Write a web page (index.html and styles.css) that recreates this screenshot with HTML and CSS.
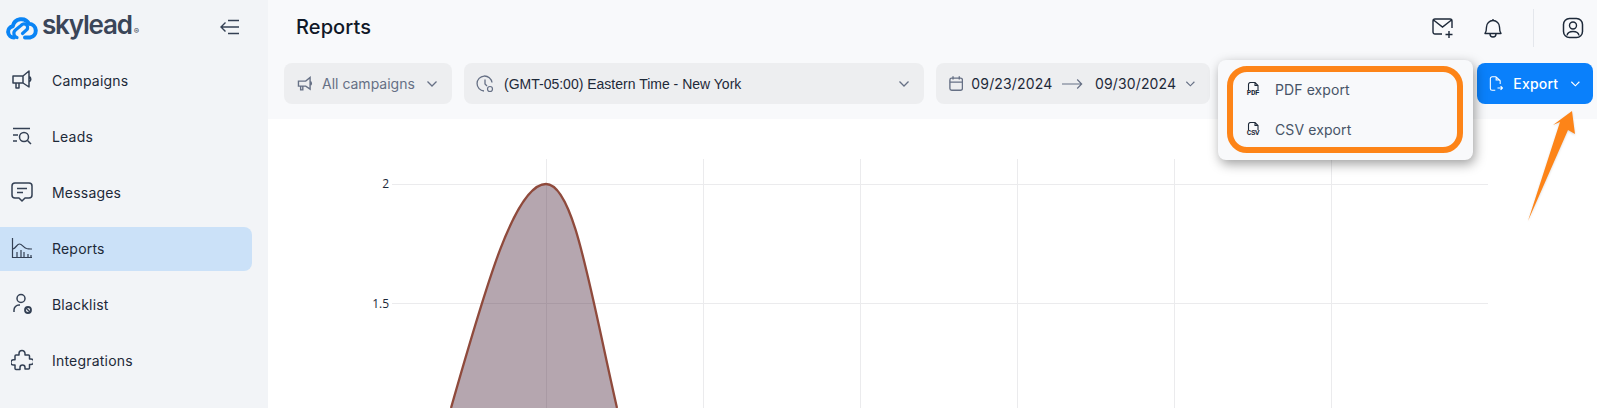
FILE: index.html
```html
<!DOCTYPE html>
<html lang="en">
<head>
<meta charset="utf-8">
<title>Reports</title>
<link rel="stylesheet" href="styles.css">
</head>
<body>
<div class="app">
  <aside class="sidebar">
    <div class="brand">
      <svg class="logo" width="32" height="26" viewBox="0 0 32 26"><path d="M8 23.500A5.700 5.700 0 0 1 6.800 12.200 8.700 8.700 0 0 1 23 9.800 6.900 6.900 0 0 1 24 23.500H19" fill="none" stroke="#0a84f5" stroke-width="4" stroke-linejoin="round" stroke-linecap="round"/><path d="M11 23.500A4.300 4.300 0 0 1 9.500 16L15 11.500A3.600 3.600 0 0 1 21 15.500L16.500 19.500" fill="none" stroke="#0a84f5" stroke-width="3.200" stroke-linecap="round"/></svg>
      <span class="brand-name">skylead</span><span class="brand-mark">®</span>
      <svg class="collapse" width="22" height="16" viewBox="0 0 22 16"><path d="M9 1.500h11M9 14.500h11M2 8h18M6.500 3.500L2 8l4.500 4.500" fill="none" stroke="#344054" stroke-width="1.400"/></svg>
    </div>
    <nav class="nav">
      <a class="nav-item"><svg class="nav-icon" viewBox="0 0 22 22"><path d="M2 7h10l6-5v16l-6-4H2zM5 14v5h3v-5M18 7.500a3 3 0 0 1 0 5.500M12 7v7" fill="none" stroke="#344054" stroke-width="1.500" stroke-linejoin="round"/></svg><span>Campaigns</span></a>
      <a class="nav-item"><svg class="nav-icon" viewBox="0 0 22 22"><path d="M2 3.500h17M2 10h5M2 16h4" fill="none" stroke="#344054" stroke-width="1.500"/><circle cx="13" cy="12" r="4.500" fill="none" stroke="#344054" stroke-width="1.500"/><path d="M16.500 15.500L20 19" stroke="#344054" stroke-width="1.500"/></svg><span>Leads</span></a>
      <a class="nav-item"><svg class="nav-icon" viewBox="0 0 22 22"><path d="M4 2h14a3 3 0 0 1 3 3v9a3 3 0 0 1-3 3h-4l-3 3-3-3H4a3 3 0 0 1-3-3V5a3 3 0 0 1 3-3zM6 7.500h10M6 11.500h6" fill="none" stroke="#344054" stroke-width="1.500" stroke-linejoin="round"/></svg><span>Messages</span></a>
      <a class="nav-item active"><svg class="nav-icon" viewBox="0 0 22 22"><path d="M1.500 1v19.500H21M2 12c3-1 4-5 6.500-5 2.500 0 4 3.500 7 4.500 2 .6 3.500.5 5.500.5M6 20v-5M10 20v-7M13 20v-5M17 20v-3M20 20v-2" fill="none" stroke="#344054" stroke-width="1.200"/></svg><span>Reports</span></a>
      <a class="nav-item"><svg class="nav-icon" viewBox="0 0 22 22"><circle cx="10" cy="5.500" r="4" fill="none" stroke="#344054" stroke-width="1.500"/><path d="M3 19v-2a5 5 0 0 1 5-5h1" fill="none" stroke="#344054" stroke-width="1.500"/><circle cx="17" cy="17" r="3" fill="none" stroke="#344054" stroke-width="1.800"/><path d="M15 15l4 4" stroke="#344054" stroke-width="1.500"/></svg><span>Blacklist</span></a>
      <a class="nav-item"><svg class="nav-icon" viewBox="0 0 22 22"><path d="M8 4.500a3 3 0 1 1 6 0V6h3.500a1 1 0 0 1 1 1v3H20a2.700 2.700 0 0 1 0 5.500h-1.500v3.500a1 1 0 0 1-1 1H14v-1.500a2.500 2.500 0 0 0-5 0V20.500H5a1 1 0 0 1-1-1V16H2.500a2.600 2.600 0 0 1 0-5.200H4V7a1 1 0 0 1 1-1h3z" fill="none" stroke="#344054" stroke-width="1.500" stroke-linejoin="round"/></svg><span>Integrations</span></a>
    </nav>
  </aside>
  <main class="main">
    <header class="header">
      <div class="title-row">
        <h1 class="title">Reports</h1>
        <div class="top-icons">
          <svg class="mail" width="22" height="22" viewBox="0 0 22 22"><path d="M10 17H3a2 2 0 0 1-2-2V4a2 2 0 0 1 2-2h15a2 2 0 0 1 2 2v7M1.500 3l9 7 9-7M17 14v7M13.500 17.500h7" fill="none" stroke="#1d2939" stroke-width="1.400"/></svg>
          <svg class="bell" width="20" height="22" viewBox="0 0 20 22"><path d="M2 16.500c1.500-2 1.500-3.500 1.500-6.500a6.500 6.500 0 0 1 13 0c0 3 0 4.500 1.500 6.500zM7 17a3 3 0 0 0 6 0M10 2v1.500" fill="none" stroke="#1d2939" stroke-width="1.400" stroke-linejoin="round"/></svg>
          <span class="divider"></span>
          <svg width="22" height="22" viewBox="0 0 22 22"><rect x="1.500" y="1.500" width="19" height="19" rx="6" fill="none" stroke="#1d2939" stroke-width="1.500"/><circle cx="11" cy="8.500" r="3.500" fill="none" stroke="#1d2939" stroke-width="1.400"/><path d="M5 18.500c.5-3 3-4 6-4s5.500 1 6 4" fill="none" stroke="#1d2939" stroke-width="1.400"/></svg>
        </div>
      </div>
      <div class="toolbar">
        <button class="select select-campaigns"><svg width="16" height="16" viewBox="0 0 22 22"><path d="M2 7h10l6-5v16l-6-4H2zM5 14v5h3v-5M18 7.500a3 3 0 0 1 0 5.500" fill="none" stroke="#667085" stroke-width="1.900"/></svg><span class="muted">All campaigns</span><svg class="chev" width="12" height="8" viewBox="0 0 12 8"><path d="M1.500 1.500L6 6l4.500-4.500" fill="none" stroke="#667085" stroke-width="1.300"/></svg></button>
        <button class="select select-zone"><svg width="18" height="18" viewBox="0 0 18 18"><path d="M16 7.500A7.500 7.500 0 1 0 8 16M9 4.500V9l2 2" fill="none" stroke="#667085" stroke-width="1.300"/><circle cx="14" cy="14" r="2.500" fill="none" stroke="#667085" stroke-width="1.200"/></svg><span class="zone-text">(GMT-05:00) Eastern Time - New York</span><svg class="chev" width="12" height="8" viewBox="0 0 12 8"><path d="M1.500 1.500L6 6l4.500-4.500" fill="none" stroke="#667085" stroke-width="1.300"/></svg></button>
        <div class="select select-date"><svg width="16" height="17" viewBox="0 0 16 17"><rect x="1" y="2.500" width="14" height="13.500" rx="2" fill="none" stroke="#667085" stroke-width="1.500"/><path d="M1 7h14M4.500 .5v3.500M11.500 .5v3.500" fill="none" stroke="#667085" stroke-width="1.500"/></svg><span class="date">09/23/2024</span><svg class="date-arrow" width="23" height="12" viewBox="0 0 23 12"><path d="M0 6h22M17 1l5 5-5 5" fill="none" stroke="#667085" stroke-width="1.300"/></svg><span class="date">09/30/2024</span><svg class="chev" width="12" height="8" viewBox="0 0 12 8"><path d="M1.500 1.500L6 6l4.500-4.500" fill="none" stroke="#667085" stroke-width="1.300"/></svg></div>
        <div class="export-wrap">
          <button class="export"><svg width="16" height="17" viewBox="0 0 16 17"><path d="M8 1H3.500a2 2 0 0 0-2 2v11a2 2 0 0 0 2 2H7M8 1l4.500 4.500V9M8 1v3.500h4.500M9.500 13.500h5.500M13 11.500l2 2-2 2" fill="none" stroke="#fff" stroke-width="1.200"/></svg><span>Export</span><svg width="12" height="8" viewBox="0 0 12 8"><path d="M1.500 1.500L6 6l4.500-4.500" fill="none" stroke="#fff" stroke-width="1.300"/></svg></button>
          <div class="menu">
            <div class="menu-ring">
              <div class="menu-item"><span class="file-icon"><svg class="file-top" width="12" height="8" viewBox="0 0 12 8"><path d="M1.500 8V2.500a2 2 0 0 1 2-2h4.500l3 3V8M8 .5v3h3" fill="none" stroke="#1d2939" stroke-width="1.100"/></svg><b>PDF</b></span><span>PDF export</span></div>
              <div class="menu-item"><span class="file-icon"><svg class="file-top" width="12" height="8" viewBox="0 0 12 8"><path d="M1.500 8V2.500a2 2 0 0 1 2-2h4.500l3 3V8M8 .5v3h3" fill="none" stroke="#1d2939" stroke-width="1.100"/></svg><b>CSV</b></span><span>CSV export</span></div>
            </div>
          </div>
        </div>
      </div>
    </header>
    <section class="chart">
      <svg class="plot" width="1329" height="289" viewBox="268 119 1329 289">
        <g stroke="#ebebed" stroke-width="1">
          <path d="M546.500 159V408M703.500 159V408M860.500 159V408M1017.500 159V408M1174.500 159V408M1331.500 159V408"/>
          <path d="M392 184.500H1488M392 303.500H1488"/>
        </g>
        <text class="tick" x="389" y="188">2</text>
        <text class="tick" x="389" y="308">1.5</text>
        <path d="M451 408C486 285 515 184 546 184C574 184 590 290 617 408Z" fill="rgb(70,32,55)" fill-opacity=".4"/>
        <path d="M451 408C486 285 515 184 546 184C574 184 590 290 617 408" fill="none" stroke="#8f4a3c" stroke-width="2.300"/>
      </svg>
    </section>
  </main>
</div>
<svg class="callout" width="60" height="125" viewBox="1525 105 60 125"><polygon points="1572,111 1575,134 1568,130 1528,221 1560,122 1553,125" fill="#fd8418"/></svg>
</body>
</html>
```
FILE: styles.css
```css
* { box-sizing: border-box; }
html, body { margin: 0; height: 408px; overflow: hidden; }
body { font-family: "Inter", "Liberation Sans", sans-serif; background: #fff; color: #1d2939; position: relative; }
.app { display: flex; height: 408px; }
.sidebar { width: 268px; flex: none; background: #f2f4f7; padding-right: 16px; }
.brand { display: flex; align-items: center; height: 53px; padding-left: 6px; position: relative; }
.logo { flex: none; }
.brand-name { font-size: 26px; font-weight: 600; letter-spacing: -1.2px; color: #3a4558; margin-left: 4px; line-height: 1; padding-bottom: 3px; }
.brand-mark { font-size: 8px; color: #3a4558; margin: 8px 0 0 2px; }
.collapse { margin-left: auto; margin-right: 11px; }
.nav { display: flex; flex-direction: column; gap: 12px; padding-top: 6px; }
.nav-item { display: flex; align-items: center; height: 44px; padding: 0 0 2px 11px; gap: 19px; border-radius: 0 8px 8px 0; font-size: 14px; letter-spacing: .2px; color: #1d2939; }
.nav-item.active { background: #cbe1f8; }
.nav-icon { width: 22px; height: 22px; flex: none; }
.main { flex: 1; min-width: 0; display: flex; flex-direction: column; }
.header { height: 119px; background: #f8f9fb; flex: none; padding: 0 4px 0 16px; }
.title-row { display: flex; align-items: center; justify-content: space-between; height: 55px; }
.title { margin: 0 0 1px 12px; font-size: 20px; font-weight: 500; letter-spacing: .1px; color: #101828; }
.top-icons { display: flex; align-items: center; gap: 30px; padding-right: 9px; }
.mail { margin-right: -1px; }
.divider { width: 1px; height: 38px; background: #e4e7ec; margin-right: -2px; }
.toolbar { display: flex; gap: 12px; margin-top: 8px; height: 41px; }
.select { border: 0; height: 41px; background: #edeef0; border-radius: 8px; display: flex; align-items: center; font: inherit; font-size: 14px; color: #1d2939; flex: none; white-space: nowrap; }
.select-campaigns { width: 168px; padding: 0 14px 0 13px; gap: 9px; }
.muted { color: #667085; letter-spacing: 0; }
.select-campaigns .chev { margin-left: auto; }
.select-zone { width: 460px; padding: 0 14px 0 12px; gap: 10px; }
.zone-text { font-family: "Liberation Sans", sans-serif; }
.select-zone .chev { margin-left: auto; }
.select-date { width: 274px; padding: 0 14px 0 13px; gap: 8px; }
.date { letter-spacing: .15px; }
.date-arrow { margin: 0 4px 0 2px; }
.select-date .chev { margin-left: 1px; }
.export-wrap { position: relative; margin-left: auto; }
.export { width: 116px; height: 41px; border: 0; border-radius: 8px; background: #0a80fb; color: #fff; font: inherit; font-size: 14px; font-weight: 500; letter-spacing: .2px; display: flex; align-items: center; padding: 0 12px; gap: 10px; }
.export span { margin-right: 2px; }
.menu { position: absolute; top: -3px; right: 120px; width: 255px; height: 100px; background: #f8f9fb; border-radius: 8px; box-shadow: 2px 4px 12px rgba(0,0,0,.38); padding: 6px 10px 7px 9px; }
.menu-ring { height: 87px; border: 6px solid #fd8418; border-radius: 20px; padding: 0 0 0 13px; display: flex; flex-direction: column; justify-content: center; gap: 8px; }
.menu-item { display: flex; align-items: center; gap: 15px; height: 32px; font-size: 14px; color: #475467; letter-spacing: .1px; }
.file-icon { width: 14px; display: flex; flex-direction: column; align-items: center; line-height: 1; }
.file-top { display: block; flex: none; }
.file-icon b { display: block; font-family: "Liberation Mono", monospace; font-size: 7.500px; line-height: 7px; font-weight: 700; color: #1d2939; letter-spacing: -.4px; margin-top: 0; }
.chart { flex: 1; min-height: 0; background: #fff; }
.plot { display: block; }
.tick { font-family: "Open Sans", sans-serif; font-size: 12px; fill: #1d2939; text-anchor: end; }
.callout { position: absolute; left: 1525px; top: 105px; filter: drop-shadow(0 1px 1px rgba(0,0,0,.15)); }
```
